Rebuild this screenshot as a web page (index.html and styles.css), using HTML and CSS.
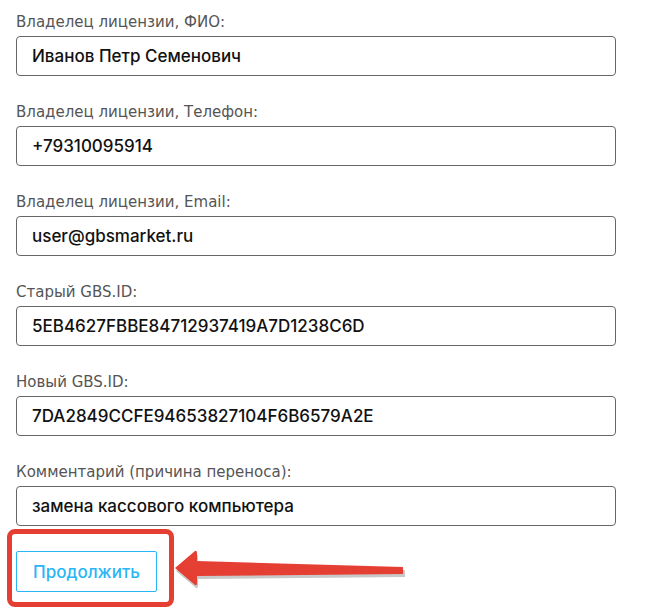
FILE: index.html
```html
<!DOCTYPE html>
<html lang="ru">
<head>
    <meta charset="UTF-8">
    <meta name="viewport" content="width=device-width, initial-scale=1.0">
    <title>Перенос лицензии</title>
    <link rel="stylesheet" href="styles.css">
</head>
<body>
    <form class="transfer-form">
        <div class="form-group">
            <label for="ownerName">Владелец лицензии, ФИО:</label>
            <input type="text" id="ownerName" value="Иванов Петр Семенович">
        </div>
        <div class="form-group">
            <label for="ownerPhone">Владелец лицензии, Телефон:</label>
            <input type="text" id="ownerPhone" value="+79310095914">
        </div>
        <div class="form-group">
            <label for="ownerEmail">Владелец лицензии, Email:</label>
            <input type="text" id="ownerEmail" value="user@gbsmarket.ru">
        </div>
        <div class="form-group">
            <label for="oldId">Старый GBS.ID:</label>
            <input type="text" id="oldId" value="5EB4627FBBE84712937419A7D1238C6D">
        </div>
        <div class="form-group">
            <label for="newId">Новый GBS.ID:</label>
            <input type="text" id="newId" value="7DA2849CCFE94653827104F6B6579A2E">
        </div>
        <div class="form-group last">
            <label for="comment">Комментарий (причина переноса):</label>
            <input type="text" id="comment" value="замена кассового компьютера">
        </div>
        <div class="actions">
            <button type="button" class="btn-continue">Продолжить</button>
            <span class="highlight"></span>
            <svg class="arrow" width="240" height="50" viewBox="0 0 240 50">
                <path d="M3 28 L23 12 Q25 11 25 14 L25 21 L232 27 L232 34 L25 36 L25 43 Q25 46 23 45 Z" fill="#c8c8c8" transform="translate(1 2)"/>
                <path d="M3 27 L23 10 Q25 9 25 12 L25 20 L231 26 L231 33 L25 35 L25 42 Q25 45 23 44 Z" fill="#e53e33"/>
            </svg>
        </div>
    </form>
</body>
</html>
```

FILE: styles.css
```css
html, body {
    height: 100%;
}
body {
    margin: 0;
    padding: 0;
    background-color: #fff;
    font-family: 'Inter', 'Open Sans', sans-serif;
}
.transfer-form {
    padding: 12px 40px 0 16px;
}
.form-group {
    margin-bottom: 26px;
}
.form-group.last {
    margin-bottom: 0;
}
.form-group label {
    display: block;
    height: 20px;
    line-height: 20px;
    margin-bottom: 4px;
    font-family: 'DejaVu Sans', sans-serif;
    font-size: 15px;
    color: #555;
}
.form-group input {
    display: block;
    box-sizing: border-box;
    width: 600px;
    height: 40px;
    padding: 0 15px;
    border: 1px solid #666;
    border-radius: 4px;
    font-family: inherit;
    font-size: 17px;
    font-weight: 500;
    color: #111;
    background: #fff;
}
.actions {
    position: relative;
    padding-top: 25px;
}
.btn-continue {
    box-sizing: border-box;
    width: 141px;
    height: 41px;
    border: 1px solid #29b6f6;
    border-radius: 2px;
    background: #fff;
    color: #29b6f6;
    font-family: inherit;
    font-size: 17px;
    font-weight: 500;
    cursor: pointer;
}
.highlight {
    position: absolute;
    left: -9px;
    top: 3px;
    width: 167px;
    height: 78px;
    box-sizing: border-box;
    border: 5px solid #e53e33;
    border-radius: 8px;
}
.arrow {
    position: absolute;
    left: 156px;
    top: 15px;
}
```
